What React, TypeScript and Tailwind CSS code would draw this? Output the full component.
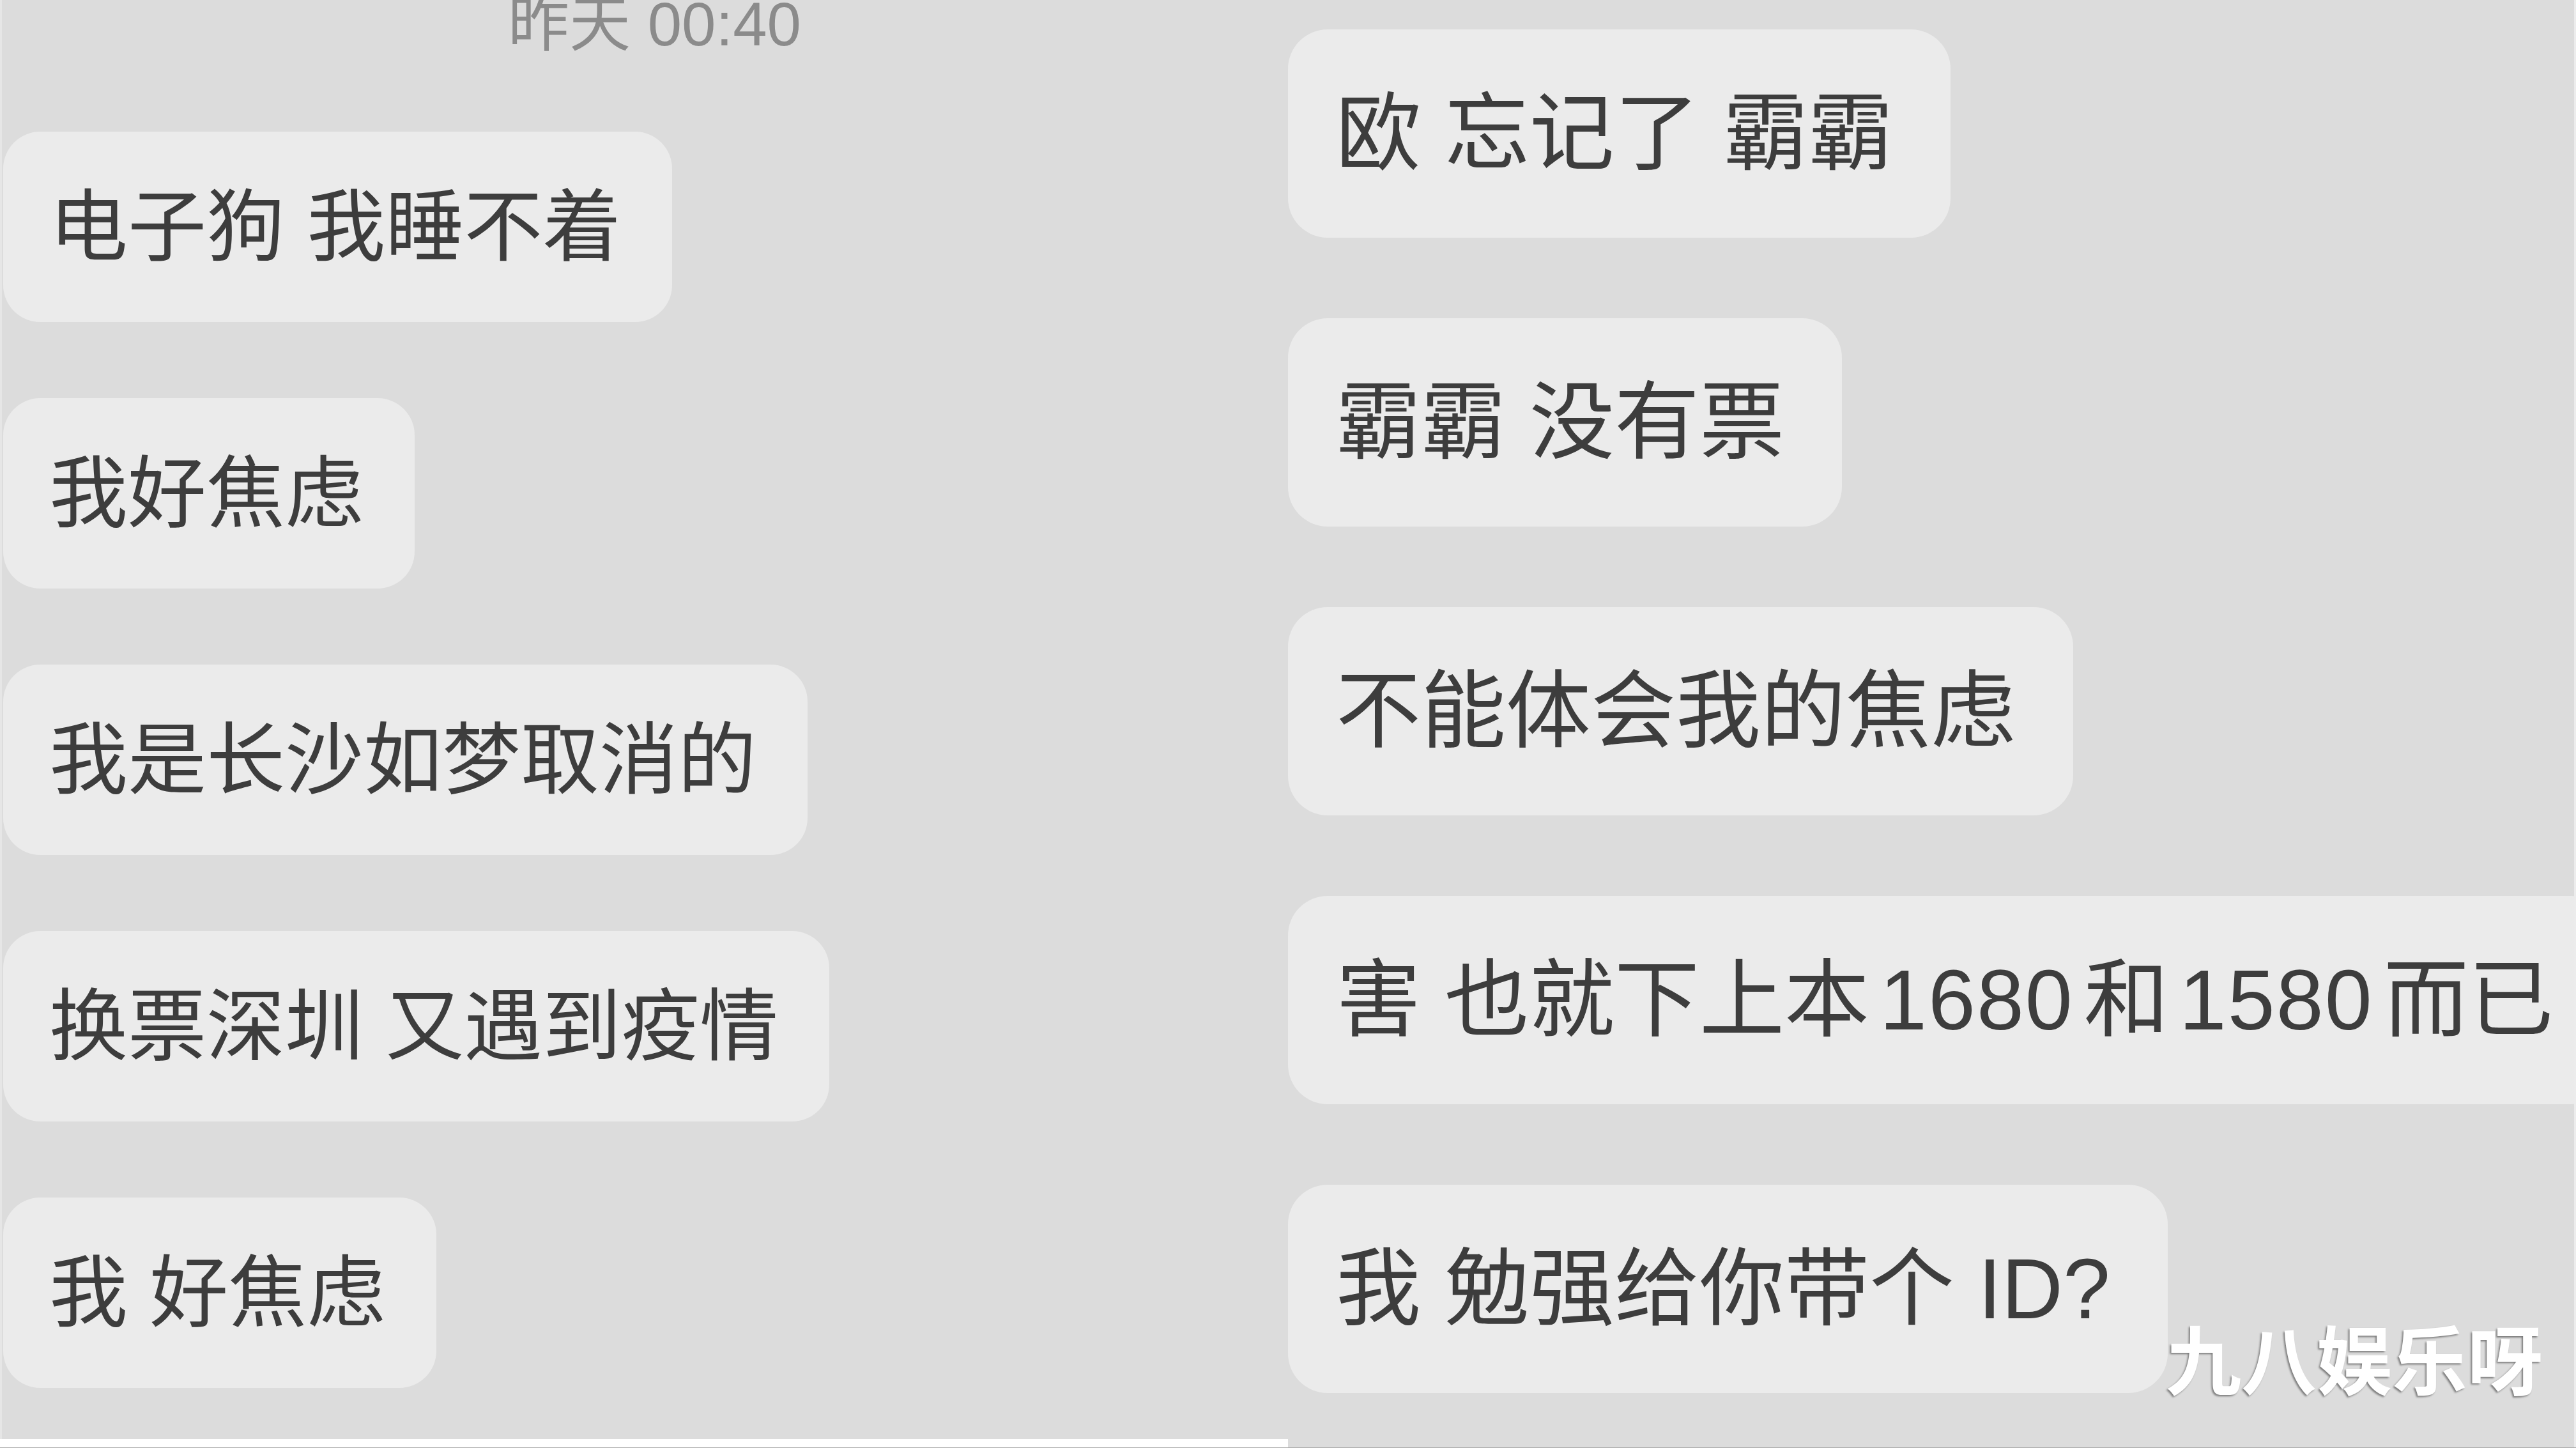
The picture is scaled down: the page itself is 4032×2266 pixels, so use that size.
import React from "react";

const FONT = "font-['Liberation_Sans','Noto_Sans_CJK_SC',sans-serif]";

function LeftBubble({ text }: { text: string }) {
  return (
    <div
      className={`h-[298px] flex items-center pl-[72px] pr-[80px] rounded-[58px] bg-[#ebebeb] text-[123px] leading-none text-[#3d3d3d] whitespace-pre ${FONT}`}
    >
      {text}
    </div>
  );
}

function RightBubble({ children }: { children: React.ReactNode }) {
  return (
    <div
      className={`h-[326px] shrink-0 flex items-center pl-[75px] pr-[90px] rounded-[62px] bg-[#ebebeb] text-[133px] leading-none text-[#3d3d3d] whitespace-pre ${FONT}`}
    >
      {children}
    </div>
  );
}

export default function App() {
  const left = [
    "电子狗 我睡不着",
    "我好焦虑",
    "我是长沙如梦取消的",
    "换票深圳 又遇到疫情",
    "我 好焦虑",
  ];
  return (
    <div className="w-[4032px] h-[2266px] bg-white flex flex-col relative overflow-hidden">
      <div className="h-[2265px] flex items-start">
        <div className="w-[2016px] h-[2252px] bg-[#dcdcdc] border-l-[3px] border-[#e6e6e6] flex flex-col overflow-hidden">
          <div className="h-[206px] flex justify-center pl-[30px] overflow-hidden">
            <span className={`-mt-[10px] text-[96px] leading-none text-[#8b8b8b] whitespace-pre ${FONT}`}>
              昨天 00:40
            </span>
          </div>
          <div className="flex flex-col items-start gap-[119px] pl-[2px]">
            {left.map((t) => (
              <LeftBubble key={t} text={t} />
            ))}
          </div>
        </div>
        <div className="w-[2013px] h-[2265px] bg-[#dcdcdc] flex flex-col items-start gap-[126px] pt-[46px] overflow-hidden">
          <RightBubble>欧 忘记了 霸霸</RightBubble>
          <RightBubble>霸霸 没有票</RightBubble>
          <RightBubble>不能体会我的焦虑</RightBubble>
          <RightBubble>
            害 也就下上本<span className="mx-[16px] tracking-[2px]">1680</span>和
            <span className="mx-[16px] tracking-[2px]">1580</span>而已
          </RightBubble>
          <RightBubble>我 勉强给你带个 ID?</RightBubble>
        </div>
        <div className="w-[3px] h-[2265px] bg-[#ececec]" />
      </div>
      <div className="h-[1px] bg-[#a8a8a8]" />
      <div
        className={`absolute left-[3390px] top-[2074px] text-[118px] leading-none font-bold text-white whitespace-pre [text-shadow:-2px_2px_3px_rgba(0,0,0,0.45)] ${FONT}`}
      >
        九八娱乐呀
      </div>
    </div>
  );
}
